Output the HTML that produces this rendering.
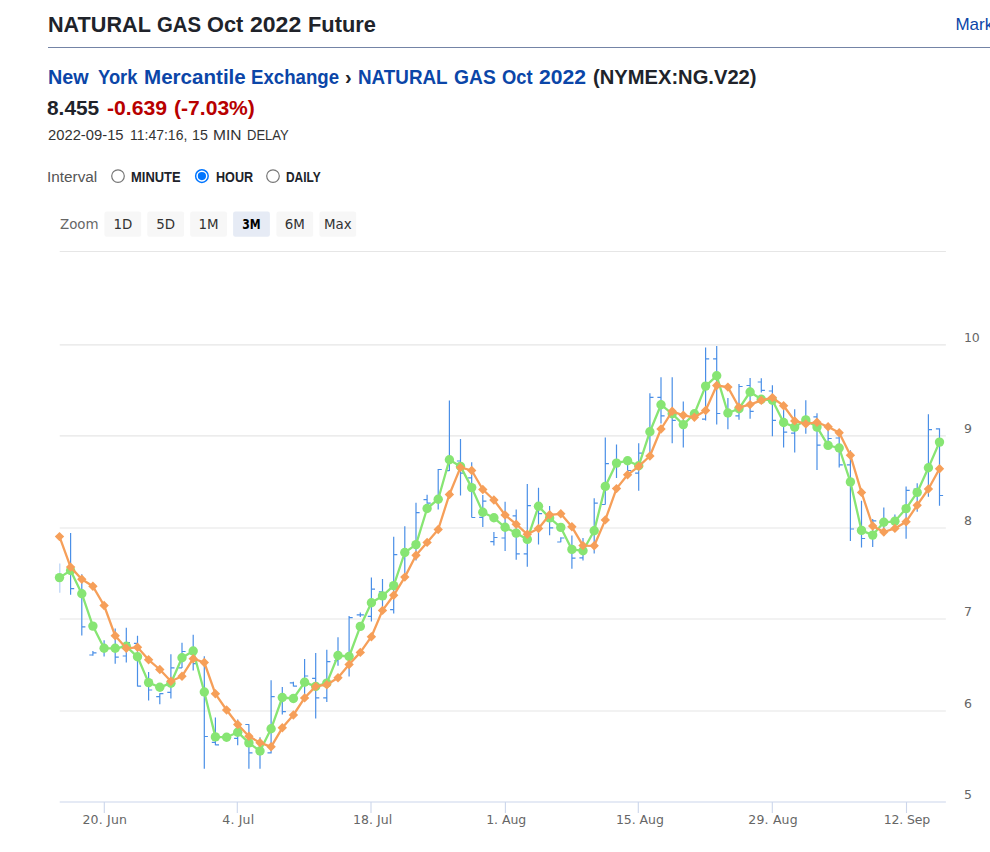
<!DOCTYPE html>
<html lang="en"><head><meta charset="utf-8"><title>NATURAL GAS Oct 2022 Future</title>
<style>
html,body{margin:0;padding:0;background:#fff}
body{width:990px;height:852px;position:relative;overflow:hidden;font-family:'Liberation Sans',sans-serif}
.t{position:absolute;white-space:pre;margin:0}
.hr{position:absolute;left:48px;top:46.8px;width:942px;height:1.2px;background:#7484a6}
.chart{position:absolute;left:0;top:0}
</style></head><body>
<div class="hr"></div>
<div id="ti0" class="t" style="left:47.50px;top:13.59px;height:22.1px;line-height:22.1px;font-size:22.1px;font-weight:700;color:#20232a;font-family:'Liberation Sans',sans-serif;transform:scaleX(0.9786);transform-origin:0 0;">NATURAL</div> <div id="ti1" class="t" style="left:157.25px;top:13.59px;height:22.1px;line-height:22.1px;font-size:22.1px;font-weight:700;color:#20232a;font-family:'Liberation Sans',sans-serif;transform:scaleX(0.9218);transform-origin:0 0;">GAS</div> <div id="ti2" class="t" style="left:206.75px;top:13.59px;height:22.1px;line-height:22.1px;font-size:22.1px;font-weight:700;color:#20232a;font-family:'Liberation Sans',sans-serif;transform:scaleX(0.9832);transform-origin:0 0;">Oct</div> <div id="ti3" class="t" style="left:250.00px;top:13.59px;height:22.1px;line-height:22.1px;font-size:22.1px;font-weight:700;color:#20232a;font-family:'Liberation Sans',sans-serif;transform:scaleX(1.0421);transform-origin:0 0;">2022</div> <div id="ti4" class="t" style="left:307.50px;top:13.59px;height:22.1px;line-height:22.1px;font-size:22.1px;font-weight:700;color:#20232a;font-family:'Liberation Sans',sans-serif;transform:scaleX(0.9872);transform-origin:0 0;">Future</div> <div id="mark" class="t" style="left:955.45px;top:15.61px;height:17px;line-height:17px;font-size:17px;font-weight:400;color:#0b46a8;font-family:'Liberation Sans',sans-serif;">Market</div> <div id="ba0" class="t" style="left:48.00px;top:67.65px;height:19.9px;line-height:19.9px;font-size:19.9px;font-weight:700;color:#0b46a8;font-family:'Liberation Sans',sans-serif;transform:scaleX(0.9937);transform-origin:0 0;">New</div> <div id="ba1" class="t" style="left:98.00px;top:67.65px;height:19.9px;line-height:19.9px;font-size:19.9px;font-weight:700;color:#0b46a8;font-family:'Liberation Sans',sans-serif;transform:scaleX(0.9224);transform-origin:0 0;">York</div> <div id="ba2" class="t" style="left:144.00px;top:67.65px;height:19.9px;line-height:19.9px;font-size:19.9px;font-weight:700;color:#0b46a8;font-family:'Liberation Sans',sans-serif;transform:scaleX(1.0342);transform-origin:0 0;">Mercantile</div> <div id="ba3" class="t" style="left:251.25px;top:67.65px;height:19.9px;line-height:19.9px;font-size:19.9px;font-weight:700;color:#0b46a8;font-family:'Liberation Sans',sans-serif;transform:scaleX(0.9369);transform-origin:0 0;">Exchange</div> <div id="bb0" class="t" style="left:345.00px;top:67.65px;height:19.9px;line-height:19.9px;font-size:19.9px;font-weight:700;color:#20232a;font-family:'Liberation Sans',sans-serif;">›</div> <div id="bc0" class="t" style="left:358.25px;top:67.65px;height:19.9px;line-height:19.9px;font-size:19.9px;font-weight:700;color:#0b46a8;font-family:'Liberation Sans',sans-serif;transform:scaleX(0.9466);transform-origin:0 0;">NATURAL</div> <div id="bc1" class="t" style="left:453.75px;top:67.65px;height:19.9px;line-height:19.9px;font-size:19.9px;font-weight:700;color:#0b46a8;font-family:'Liberation Sans',sans-serif;transform:scaleX(0.9687);transform-origin:0 0;">GAS</div> <div id="bc2" class="t" style="left:502.25px;top:67.65px;height:19.9px;line-height:19.9px;font-size:19.9px;font-weight:700;color:#0b46a8;font-family:'Liberation Sans',sans-serif;transform:scaleX(0.9226);transform-origin:0 0;">Oct</div> <div id="bc3" class="t" style="left:539.00px;top:67.65px;height:19.9px;line-height:19.9px;font-size:19.9px;font-weight:700;color:#0b46a8;font-family:'Liberation Sans',sans-serif;transform:scaleX(1.0643);transform-origin:0 0;">2022</div> <div id="bd0" class="t" style="left:593.00px;top:67.65px;height:19.9px;line-height:19.9px;font-size:19.9px;font-weight:700;color:#20232a;font-family:'Liberation Sans',sans-serif;transform:scaleX(1.0135);transform-origin:0 0;">(NYMEX:NG.V22)</div> <div id="pa0" class="t" style="left:47.25px;top:98.55px;height:19.9px;line-height:19.9px;font-size:19.9px;font-weight:700;color:#20232a;font-family:'Liberation Sans',sans-serif;transform:scaleX(1.0485);transform-origin:0 0;">8.455</div> <div id="pb0" class="t" style="left:106.75px;top:98.55px;height:19.9px;line-height:19.9px;font-size:19.9px;font-weight:700;color:#b80000;font-family:'Liberation Sans',sans-serif;transform:scaleX(1.0667);transform-origin:0 0;">-0.639</div> <div id="pb1" class="t" style="left:174.00px;top:98.55px;height:19.9px;line-height:19.9px;font-size:19.9px;font-weight:700;color:#b80000;font-family:'Liberation Sans',sans-serif;transform:scaleX(1.0606);transform-origin:0 0;">(-7.03%)</div> <div id="da0" class="t" style="left:48.00px;top:128.36px;height:14.7px;line-height:14.7px;font-size:14.7px;font-weight:400;color:#333;font-family:'Liberation Sans',sans-serif;transform:scaleX(1.0061);transform-origin:0 0;">2022-09-15</div> <div id="da1" class="t" style="left:129.50px;top:128.36px;height:14.7px;line-height:14.7px;font-size:14.7px;font-weight:400;color:#333;font-family:'Liberation Sans',sans-serif;transform:scaleX(0.9524);transform-origin:0 0;">11:47:16,</div> <div id="da2" class="t" style="left:192.00px;top:128.36px;height:14.7px;line-height:14.7px;font-size:14.7px;font-weight:400;color:#333;font-family:'Liberation Sans',sans-serif;transform:scaleX(0.9696);transform-origin:0 0;">15</div> <div id="da3" class="t" style="left:213.25px;top:128.36px;height:14.7px;line-height:14.7px;font-size:14.7px;font-weight:400;color:#333;font-family:'Liberation Sans',sans-serif;transform:scaleX(1.0572);transform-origin:0 0;">MIN</div> <div id="da4" class="t" style="left:246.50px;top:128.36px;height:14.7px;line-height:14.7px;font-size:14.7px;font-weight:400;color:#333;font-family:'Liberation Sans',sans-serif;transform:scaleX(0.8862);transform-origin:0 0;">DELAY</div> <div id="in0" class="t" style="left:46.75px;top:168.93px;height:15.2px;line-height:15.2px;font-size:15.2px;font-weight:400;color:#555;font-family:'Liberation Sans',sans-serif;transform:scaleX(1.0095);transform-origin:0 0;">Interval</div> <div id="r0" class="t" style="left:131.25px;top:169.86px;height:14.1px;line-height:14.1px;font-size:14.1px;font-weight:700;color:#20232a;font-family:'Liberation Sans',sans-serif;transform:scaleX(0.9191);transform-origin:0 0;">MINUTE</div> <div id="r1" class="t" style="left:215.50px;top:169.86px;height:14.1px;line-height:14.1px;font-size:14.1px;font-weight:700;color:#20232a;font-family:'Liberation Sans',sans-serif;transform:scaleX(0.8944);transform-origin:0 0;">HOUR</div> <div id="r2" class="t" style="left:285.75px;top:169.86px;height:14.1px;line-height:14.1px;font-size:14.1px;font-weight:700;color:#20232a;font-family:'Liberation Sans',sans-serif;transform:scaleX(0.8466);transform-origin:0 0;">DAILY</div>

<svg class="chart" width="990" height="852" viewBox="0 0 990 852"><circle cx="118" cy="176.1" r="6.3" fill="#fff" stroke="#767676" stroke-width="1.2"/><circle cx="201.9" cy="176.1" r="6.3" fill="#fff" stroke="#0075ff" stroke-width="1.5"/><circle cx="201.9" cy="176.1" r="4.1" fill="#0075ff"/><circle cx="273" cy="176.1" r="6.3" fill="#fff" stroke="#767676" stroke-width="1.2"/><path d="M59.7 251.5H945.9" stroke="#e6e6e6" stroke-width="1.1" fill="none"/><path d="M59.7 344.8H945.9" stroke="#e6e6e6" stroke-width="1.2" fill="none"/><path d="M59.7 435.8H945.9" stroke="#e6e6e6" stroke-width="1.2" fill="none"/><path d="M59.7 528.0H945.9" stroke="#e6e6e6" stroke-width="1.2" fill="none"/><path d="M59.7 619.0H945.9" stroke="#e6e6e6" stroke-width="1.2" fill="none"/><path d="M59.7 711.0H945.9" stroke="#e6e6e6" stroke-width="1.2" fill="none"/><path d="M59.7 802.0H945.9" stroke="#ccd6eb" stroke-width="1.2" fill="none"/><path d="M104.3 802.0v11" stroke="#ccd6eb" stroke-width="1.1" fill="none"/><path d="M237.3 802.0v11" stroke="#ccd6eb" stroke-width="1.1" fill="none"/><path d="M371.0 802.0v11" stroke="#ccd6eb" stroke-width="1.1" fill="none"/><path d="M505.4 802.0v11" stroke="#ccd6eb" stroke-width="1.1" fill="none"/><path d="M638.3 802.0v11" stroke="#ccd6eb" stroke-width="1.1" fill="none"/><path d="M772.3 802.0v11" stroke="#ccd6eb" stroke-width="1.1" fill="none"/><path d="M906.5 802.0v11" stroke="#ccd6eb" stroke-width="1.1" fill="none"/><path d="M70.6 532.9V594.7M70.6 588.7h3.6M81.8 574.2V635.5M81.8 626.8h3.6M92.9 651.1V655.8M92.9 655.0h-3.6M92.9 652.8h3.6M104.1 640.2V656.5M115.2 628.6V663.7M115.2 657.2h3.6M126.3 627.7V662.4M126.3 656.0h-3.6M126.3 642.5h3.6M137.5 635.8V686.4M137.5 643.4h-3.6M137.5 686.1h3.6M148.6 672.1V700.6M148.6 690.0h3.6M159.8 693.2V704.2M159.8 696.6h-3.6M159.8 693.7h3.6M170.9 654.3V698.5M170.9 692.4h-3.6M170.9 667.8h3.6M182.0 642.7V668.1M182.0 667.8h-3.6M182.0 651.5h3.6M193.2 634.8V670.5M193.2 663.7h3.6M204.3 656.3V768.7M204.3 736.5h3.6M215.4 717.4V745.3M215.4 742.3h-3.6M215.4 744.9h3.6M237.7 719.4V745.3M237.7 738.3h-3.6M248.9 724.2V768.7M248.9 724.5h-3.6M248.9 752.9h3.6M260.0 737.2V768.7M271.1 680.2V753.4M271.1 752.9h-3.6M271.1 696.7h3.6M282.3 687.0V714.5M282.3 711.7h3.6M293.4 681.8V686.6M293.4 682.9h-3.6M293.4 686.2h3.6M304.6 659.1V695.0M304.6 676.0h3.6M315.7 653.0V718.5M315.7 678.4h-3.6M315.7 697.8h3.6M326.8 649.7V702.0M326.8 697.8h-3.6M326.8 661.6h3.6M338.0 637.2V665.7M338.0 660.6h-3.6M349.1 616.1V676.6M349.1 617.7h3.6M360.3 612.4V616.9M360.3 614.8h-3.6M360.3 614.8h3.6M371.4 577.6V621.5M371.4 616.4h-3.6M371.4 589.1h3.6M382.5 578.9V611.3M382.5 591.8h-3.6M393.7 536.8V613.6M393.7 609.6h-3.6M393.7 554.6h3.6M404.8 526.3V576.0M416.0 502.8V560.4M416.0 512.6h3.6M427.1 494.7V503.8M427.1 499.6h-3.6M427.1 503.2h3.6M438.2 469.1V509.6M438.2 469.5h3.6M449.4 400.4V470.9M449.4 470.6h-3.6M460.5 438.9V495.5M460.5 461.0h-3.6M460.5 473.2h3.6M471.7 462.2V517.5M471.7 477.8h-3.6M471.7 517.5h3.6M482.8 495.0V527.0M482.8 517.4h-3.6M482.8 501.2h3.6M493.9 532.0V545.6M493.9 541.7h-3.6M493.9 537.5h3.6M505.1 501.7V550.9M505.1 538.0h-3.6M516.2 509.6V559.8M516.2 515.8h-3.6M516.2 553.8h3.6M527.3 484.0V566.8M527.3 553.8h-3.6M527.3 505.6h3.6M538.5 487.8V544.5M538.5 513.7h3.6M549.6 506.1V535.2M549.6 527.9h3.6M560.8 537.2V542.3M560.8 542.0h-3.6M560.8 538.0h3.6M571.9 535.5V568.7M571.9 558.2h3.6M583.0 538.0V560.6M583.0 557.9h-3.6M594.2 498.3V553.4M594.2 503.2h3.6M605.3 437.4V504.5M605.3 504.5h-3.6M605.3 463.6h3.6M616.5 444.4V478.0M627.6 463.0V470.8M627.6 470.5h3.6M638.7 443.3V490.7M638.7 473.1h-3.6M638.7 453.1h3.6M649.9 393.2V453.6M649.9 397.3h3.6M661.0 377.2V423.5M661.0 397.3h-3.6M661.0 415.8h3.6M672.2 377.2V443.3M672.2 420.4h3.6M683.3 401.4V447.6M705.6 347.5V420.5M705.6 419.2h-3.6M705.6 358.8h3.6M716.7 346.1V424.5M716.7 358.8h-3.6M716.7 413.5h3.6M727.9 398.0V429.3M739.0 384.0V419.7M739.0 415.8h-3.6M739.0 386.5h3.6M750.1 378.1V418.8M750.1 385.5h-3.6M750.1 411.3h3.6M761.3 378.2V392.6M761.3 382.0h-3.6M761.3 390.4h3.6M772.4 385.2V436.2M772.4 391.0h-3.6M772.4 420.3h3.6M783.6 403.0V447.6M783.6 432.2h3.6M794.7 409.3V452.6M794.7 433.2h-3.6M805.8 400.2V433.8M817.0 413.2V469.9M817.0 416.8h-3.6M817.0 445.2h3.6M828.1 430.0V441.0M828.1 438.5h3.6M839.2 436.5V467.4M839.2 438.0h-3.6M839.2 464.9h3.6M850.4 450.3V540.9M850.4 464.8h-3.6M850.4 529.0h3.6M861.5 500.8V547.6M861.5 538.5h3.6M872.7 519.0V547.0M872.7 520.8h3.6M883.8 507.6V536.0M894.9 514.6V526.0M906.1 486.5V538.7M906.1 490.3h3.6M917.2 483.2V511.8M917.2 489.2h-3.6M928.4 414.3V496.7M928.4 429.6h3.6M939.5 428.3V505.8M939.5 428.8h-3.6M939.5 495.5h3.6" stroke="#4a8fe7" stroke-width="1.2" fill="none"/><path d="M59.8 563.6V592.8" stroke="#4a8fe7" stroke-opacity="0.4" stroke-width="1.2" fill="none"/><polyline points="59.5,577.6 70.6,570.5 81.8,593.7 92.9,626.1 104.1,648.3 115.2,648.3 126.3,646.3 137.5,656.8 148.6,682.6 159.8,687.3 170.9,683.2 182.0,657.8 193.2,651.0 204.3,692.0 215.4,736.9 226.6,737.3 237.7,732.2 248.9,742.9 260.0,751.0 271.1,728.8 282.3,697.5 293.4,698.5 304.6,682.3 315.7,686.4 326.8,683.1 338.0,655.5 349.1,656.5 360.3,626.4 371.4,602.7 382.5,595.9 393.7,585.6 404.8,552.5 416.0,544.6 427.1,508.5 438.2,499.2 449.4,459.7 460.5,466.4 471.7,487.6 482.8,512.3 493.9,517.8 505.1,527.3 516.2,533.1 527.3,539.4 538.5,506.3 549.6,517.9 560.8,527.4 571.9,549.4 583.0,550.8 594.2,530.8 605.3,486.4 616.5,463.1 627.6,460.7 638.7,465.8 649.9,431.7 661.0,404.7 672.2,413.8 683.3,424.6 694.4,413.8 705.6,386.1 716.7,375.8 727.9,413.0 739.0,408.7 750.1,392.0 761.3,399.2 772.4,400.3 783.6,422.5 794.7,427.1 805.8,419.9 817.0,427.1 828.1,445.4 839.2,448.0 850.4,481.9 861.5,530.4 872.7,535.1 883.8,522.3 894.9,521.3 906.1,508.6 917.2,492.4 928.4,467.8 939.5,442.1" fill="none" stroke="#87e573" stroke-width="2.3" stroke-linejoin="round" stroke-linecap="round"/><g fill="#87e573"><circle cx="59.5" cy="577.6" r="4.7"/><circle cx="70.6" cy="570.5" r="4.7"/><circle cx="81.8" cy="593.7" r="4.7"/><circle cx="92.9" cy="626.1" r="4.7"/><circle cx="104.1" cy="648.3" r="4.7"/><circle cx="115.2" cy="648.3" r="4.7"/><circle cx="126.3" cy="646.3" r="4.7"/><circle cx="137.5" cy="656.8" r="4.7"/><circle cx="148.6" cy="682.6" r="4.7"/><circle cx="159.8" cy="687.3" r="4.7"/><circle cx="170.9" cy="683.2" r="4.7"/><circle cx="182.0" cy="657.8" r="4.7"/><circle cx="193.2" cy="651.0" r="4.7"/><circle cx="204.3" cy="692.0" r="4.7"/><circle cx="215.4" cy="736.9" r="4.7"/><circle cx="226.6" cy="737.3" r="4.7"/><circle cx="237.7" cy="732.2" r="4.7"/><circle cx="248.9" cy="742.9" r="4.7"/><circle cx="260.0" cy="751.0" r="4.7"/><circle cx="271.1" cy="728.8" r="4.7"/><circle cx="282.3" cy="697.5" r="4.7"/><circle cx="293.4" cy="698.5" r="4.7"/><circle cx="304.6" cy="682.3" r="4.7"/><circle cx="315.7" cy="686.4" r="4.7"/><circle cx="326.8" cy="683.1" r="4.7"/><circle cx="338.0" cy="655.5" r="4.7"/><circle cx="349.1" cy="656.5" r="4.7"/><circle cx="360.3" cy="626.4" r="4.7"/><circle cx="371.4" cy="602.7" r="4.7"/><circle cx="382.5" cy="595.9" r="4.7"/><circle cx="393.7" cy="585.6" r="4.7"/><circle cx="404.8" cy="552.5" r="4.7"/><circle cx="416.0" cy="544.6" r="4.7"/><circle cx="427.1" cy="508.5" r="4.7"/><circle cx="438.2" cy="499.2" r="4.7"/><circle cx="449.4" cy="459.7" r="4.7"/><circle cx="460.5" cy="466.4" r="4.7"/><circle cx="471.7" cy="487.6" r="4.7"/><circle cx="482.8" cy="512.3" r="4.7"/><circle cx="493.9" cy="517.8" r="4.7"/><circle cx="505.1" cy="527.3" r="4.7"/><circle cx="516.2" cy="533.1" r="4.7"/><circle cx="527.3" cy="539.4" r="4.7"/><circle cx="538.5" cy="506.3" r="4.7"/><circle cx="549.6" cy="517.9" r="4.7"/><circle cx="560.8" cy="527.4" r="4.7"/><circle cx="571.9" cy="549.4" r="4.7"/><circle cx="583.0" cy="550.8" r="4.7"/><circle cx="594.2" cy="530.8" r="4.7"/><circle cx="605.3" cy="486.4" r="4.7"/><circle cx="616.5" cy="463.1" r="4.7"/><circle cx="627.6" cy="460.7" r="4.7"/><circle cx="638.7" cy="465.8" r="4.7"/><circle cx="649.9" cy="431.7" r="4.7"/><circle cx="661.0" cy="404.7" r="4.7"/><circle cx="672.2" cy="413.8" r="4.7"/><circle cx="683.3" cy="424.6" r="4.7"/><circle cx="694.4" cy="413.8" r="4.7"/><circle cx="705.6" cy="386.1" r="4.7"/><circle cx="716.7" cy="375.8" r="4.7"/><circle cx="727.9" cy="413.0" r="4.7"/><circle cx="739.0" cy="408.7" r="4.7"/><circle cx="750.1" cy="392.0" r="4.7"/><circle cx="761.3" cy="399.2" r="4.7"/><circle cx="772.4" cy="400.3" r="4.7"/><circle cx="783.6" cy="422.5" r="4.7"/><circle cx="794.7" cy="427.1" r="4.7"/><circle cx="805.8" cy="419.9" r="4.7"/><circle cx="817.0" cy="427.1" r="4.7"/><circle cx="828.1" cy="445.4" r="4.7"/><circle cx="839.2" cy="448.0" r="4.7"/><circle cx="850.4" cy="481.9" r="4.7"/><circle cx="861.5" cy="530.4" r="4.7"/><circle cx="872.7" cy="535.1" r="4.7"/><circle cx="883.8" cy="522.3" r="4.7"/><circle cx="894.9" cy="521.3" r="4.7"/><circle cx="906.1" cy="508.6" r="4.7"/><circle cx="917.2" cy="492.4" r="4.7"/><circle cx="928.4" cy="467.8" r="4.7"/><circle cx="939.5" cy="442.1" r="4.7"/></g><polyline points="59.5,536.6 70.6,567.1 81.8,579.2 92.9,586.3 104.1,605.5 115.2,635.8 126.3,648.3 137.5,647.3 148.6,659.8 159.8,669.5 170.9,681.2 182.0,676.2 193.2,658.7 204.3,662.5 215.4,693.8 226.6,710.0 237.7,724.5 248.9,736.3 260.0,742.7 271.1,746.8 282.3,727.8 293.4,715.0 304.6,697.9 315.7,686.4 326.8,684.7 338.0,677.7 349.1,664.5 360.3,652.4 371.4,636.7 382.5,610.4 393.7,595.3 404.8,577.1 416.0,555.3 427.1,542.4 438.2,529.5 449.4,494.5 460.5,467.4 471.7,470.5 482.8,489.5 493.9,500.0 505.1,515.0 516.2,524.2 527.3,534.3 538.5,528.5 549.6,514.8 560.8,513.8 571.9,526.8 583.0,545.6 594.2,545.8 605.3,519.9 616.5,488.6 627.6,474.8 638.7,466.4 649.9,456.0 661.0,429.0 672.2,411.3 683.3,415.3 694.4,417.3 705.6,410.5 716.7,385.5 727.9,387.1 739.0,407.3 750.1,404.6 761.3,400.4 772.4,397.6 783.6,405.7 794.7,420.9 805.8,423.9 817.0,422.3 828.1,426.8 839.2,432.7 850.4,455.3 861.5,492.4 872.7,526.0 883.8,532.0 894.9,528.4 906.1,521.7 917.2,505.2 928.4,489.0 939.5,468.8" fill="none" stroke="#f69f59" stroke-width="2.3" stroke-linejoin="round" stroke-linecap="round"/><g fill="#f69f59"><path d="M59.5 531.9l4.7 4.7l-4.7 4.7l-4.7 -4.7z"/><path d="M70.6 562.4l4.7 4.7l-4.7 4.7l-4.7 -4.7z"/><path d="M81.8 574.5l4.7 4.7l-4.7 4.7l-4.7 -4.7z"/><path d="M92.9 581.6l4.7 4.7l-4.7 4.7l-4.7 -4.7z"/><path d="M104.1 600.8l4.7 4.7l-4.7 4.7l-4.7 -4.7z"/><path d="M115.2 631.1l4.7 4.7l-4.7 4.7l-4.7 -4.7z"/><path d="M126.3 643.6l4.7 4.7l-4.7 4.7l-4.7 -4.7z"/><path d="M137.5 642.6l4.7 4.7l-4.7 4.7l-4.7 -4.7z"/><path d="M148.6 655.1l4.7 4.7l-4.7 4.7l-4.7 -4.7z"/><path d="M159.8 664.8l4.7 4.7l-4.7 4.7l-4.7 -4.7z"/><path d="M170.9 676.5l4.7 4.7l-4.7 4.7l-4.7 -4.7z"/><path d="M182.0 671.5l4.7 4.7l-4.7 4.7l-4.7 -4.7z"/><path d="M193.2 654.0l4.7 4.7l-4.7 4.7l-4.7 -4.7z"/><path d="M204.3 657.8l4.7 4.7l-4.7 4.7l-4.7 -4.7z"/><path d="M215.4 689.1l4.7 4.7l-4.7 4.7l-4.7 -4.7z"/><path d="M226.6 705.3l4.7 4.7l-4.7 4.7l-4.7 -4.7z"/><path d="M237.7 719.8l4.7 4.7l-4.7 4.7l-4.7 -4.7z"/><path d="M248.9 731.6l4.7 4.7l-4.7 4.7l-4.7 -4.7z"/><path d="M260.0 738.0l4.7 4.7l-4.7 4.7l-4.7 -4.7z"/><path d="M271.1 742.1l4.7 4.7l-4.7 4.7l-4.7 -4.7z"/><path d="M282.3 723.1l4.7 4.7l-4.7 4.7l-4.7 -4.7z"/><path d="M293.4 710.3l4.7 4.7l-4.7 4.7l-4.7 -4.7z"/><path d="M304.6 693.2l4.7 4.7l-4.7 4.7l-4.7 -4.7z"/><path d="M315.7 681.7l4.7 4.7l-4.7 4.7l-4.7 -4.7z"/><path d="M326.8 680.0l4.7 4.7l-4.7 4.7l-4.7 -4.7z"/><path d="M338.0 673.0l4.7 4.7l-4.7 4.7l-4.7 -4.7z"/><path d="M349.1 659.8l4.7 4.7l-4.7 4.7l-4.7 -4.7z"/><path d="M360.3 647.7l4.7 4.7l-4.7 4.7l-4.7 -4.7z"/><path d="M371.4 632.0l4.7 4.7l-4.7 4.7l-4.7 -4.7z"/><path d="M382.5 605.7l4.7 4.7l-4.7 4.7l-4.7 -4.7z"/><path d="M393.7 590.6l4.7 4.7l-4.7 4.7l-4.7 -4.7z"/><path d="M404.8 572.4l4.7 4.7l-4.7 4.7l-4.7 -4.7z"/><path d="M416.0 550.6l4.7 4.7l-4.7 4.7l-4.7 -4.7z"/><path d="M427.1 537.7l4.7 4.7l-4.7 4.7l-4.7 -4.7z"/><path d="M438.2 524.8l4.7 4.7l-4.7 4.7l-4.7 -4.7z"/><path d="M449.4 489.8l4.7 4.7l-4.7 4.7l-4.7 -4.7z"/><path d="M460.5 462.7l4.7 4.7l-4.7 4.7l-4.7 -4.7z"/><path d="M471.7 465.8l4.7 4.7l-4.7 4.7l-4.7 -4.7z"/><path d="M482.8 484.8l4.7 4.7l-4.7 4.7l-4.7 -4.7z"/><path d="M493.9 495.3l4.7 4.7l-4.7 4.7l-4.7 -4.7z"/><path d="M505.1 510.3l4.7 4.7l-4.7 4.7l-4.7 -4.7z"/><path d="M516.2 519.5l4.7 4.7l-4.7 4.7l-4.7 -4.7z"/><path d="M527.3 529.6l4.7 4.7l-4.7 4.7l-4.7 -4.7z"/><path d="M538.5 523.8l4.7 4.7l-4.7 4.7l-4.7 -4.7z"/><path d="M549.6 510.1l4.7 4.7l-4.7 4.7l-4.7 -4.7z"/><path d="M560.8 509.1l4.7 4.7l-4.7 4.7l-4.7 -4.7z"/><path d="M571.9 522.1l4.7 4.7l-4.7 4.7l-4.7 -4.7z"/><path d="M583.0 540.9l4.7 4.7l-4.7 4.7l-4.7 -4.7z"/><path d="M594.2 541.1l4.7 4.7l-4.7 4.7l-4.7 -4.7z"/><path d="M605.3 515.2l4.7 4.7l-4.7 4.7l-4.7 -4.7z"/><path d="M616.5 483.9l4.7 4.7l-4.7 4.7l-4.7 -4.7z"/><path d="M627.6 470.1l4.7 4.7l-4.7 4.7l-4.7 -4.7z"/><path d="M638.7 461.7l4.7 4.7l-4.7 4.7l-4.7 -4.7z"/><path d="M649.9 451.3l4.7 4.7l-4.7 4.7l-4.7 -4.7z"/><path d="M661.0 424.3l4.7 4.7l-4.7 4.7l-4.7 -4.7z"/><path d="M672.2 406.6l4.7 4.7l-4.7 4.7l-4.7 -4.7z"/><path d="M683.3 410.6l4.7 4.7l-4.7 4.7l-4.7 -4.7z"/><path d="M694.4 412.6l4.7 4.7l-4.7 4.7l-4.7 -4.7z"/><path d="M705.6 405.8l4.7 4.7l-4.7 4.7l-4.7 -4.7z"/><path d="M716.7 380.8l4.7 4.7l-4.7 4.7l-4.7 -4.7z"/><path d="M727.9 382.4l4.7 4.7l-4.7 4.7l-4.7 -4.7z"/><path d="M739.0 402.6l4.7 4.7l-4.7 4.7l-4.7 -4.7z"/><path d="M750.1 399.9l4.7 4.7l-4.7 4.7l-4.7 -4.7z"/><path d="M761.3 395.7l4.7 4.7l-4.7 4.7l-4.7 -4.7z"/><path d="M772.4 392.9l4.7 4.7l-4.7 4.7l-4.7 -4.7z"/><path d="M783.6 401.0l4.7 4.7l-4.7 4.7l-4.7 -4.7z"/><path d="M794.7 416.2l4.7 4.7l-4.7 4.7l-4.7 -4.7z"/><path d="M805.8 419.2l4.7 4.7l-4.7 4.7l-4.7 -4.7z"/><path d="M817.0 417.6l4.7 4.7l-4.7 4.7l-4.7 -4.7z"/><path d="M828.1 422.1l4.7 4.7l-4.7 4.7l-4.7 -4.7z"/><path d="M839.2 428.0l4.7 4.7l-4.7 4.7l-4.7 -4.7z"/><path d="M850.4 450.6l4.7 4.7l-4.7 4.7l-4.7 -4.7z"/><path d="M861.5 487.7l4.7 4.7l-4.7 4.7l-4.7 -4.7z"/><path d="M872.7 521.3l4.7 4.7l-4.7 4.7l-4.7 -4.7z"/><path d="M883.8 527.3l4.7 4.7l-4.7 4.7l-4.7 -4.7z"/><path d="M894.9 523.7l4.7 4.7l-4.7 4.7l-4.7 -4.7z"/><path d="M906.1 517.0l4.7 4.7l-4.7 4.7l-4.7 -4.7z"/><path d="M917.2 500.5l4.7 4.7l-4.7 4.7l-4.7 -4.7z"/><path d="M928.4 484.3l4.7 4.7l-4.7 4.7l-4.7 -4.7z"/><path d="M939.5 464.1l4.7 4.7l-4.7 4.7l-4.7 -4.7z"/></g><g fill="#666" font-size="12.5" style="font-family:'DejaVu Sans',sans-serif"><text x="963.9" y="341.9">10</text><text x="963.9" y="432.9">9</text><text x="963.9" y="525.1">8</text><text x="963.9" y="616.1">7</text><text x="963.9" y="708.1">6</text><text x="963.9" y="799.1">5</text><text x="104.7" y="824.2" text-anchor="middle" textLength="44.5">20. Jun</text><text x="238.2" y="824.2" text-anchor="middle" textLength="31.9">4. Jul</text><text x="372.6" y="824.2" text-anchor="middle" textLength="39.2">18. Jul</text><text x="506.2" y="824.2" text-anchor="middle" textLength="40.0">1. Aug</text><text x="639.9" y="824.2" text-anchor="middle" textLength="48.0">15. Aug</text><text x="773.0" y="824.2" text-anchor="middle" textLength="49.3">29. Aug</text><text x="907.0" y="824.2" text-anchor="middle" textLength="46.5">12. Sep</text></g><rect x="104.4" y="211.4" width="36.8" height="25.4" rx="2.3" fill="#f7f7f7"/><text x="122.8" y="228.8" text-anchor="middle" font-size="13.4" fill="#333" style="font-family:'DejaVu Sans',sans-serif">1D</text><rect x="147.3" y="211.4" width="36.8" height="25.4" rx="2.3" fill="#f7f7f7"/><text x="165.7" y="228.8" text-anchor="middle" font-size="13.4" fill="#333" style="font-family:'DejaVu Sans',sans-serif">5D</text><rect x="190.2" y="211.4" width="36.8" height="25.4" rx="2.3" fill="#f7f7f7"/><text x="208.6" y="228.8" text-anchor="middle" font-size="13.4" fill="#333" style="font-family:'DejaVu Sans',sans-serif">1M</text><rect x="233.1" y="211.4" width="36.8" height="25.4" rx="2.3" fill="#e6ebf5"/><text x="251.5" y="228.8" text-anchor="middle" font-size="13.4" fill="#000" style="font-family:'DejaVu Sans',sans-serif;font-weight:bold" textLength="18.4" lengthAdjust="spacingAndGlyphs">3M</text><rect x="276.4" y="211.4" width="36.8" height="25.4" rx="2.3" fill="#f7f7f7"/><text x="294.8" y="228.8" text-anchor="middle" font-size="13.4" fill="#333" style="font-family:'DejaVu Sans',sans-serif">6M</text><rect x="319.4" y="211.4" width="36.8" height="25.4" rx="2.3" fill="#f7f7f7"/><text x="337.8" y="228.8" text-anchor="middle" font-size="13.4" fill="#333" style="font-family:'DejaVu Sans',sans-serif">Max</text><text x="60" y="228.8" font-size="13.4" fill="#666" style="font-family:'DejaVu Sans',sans-serif">Zoom</text></svg>
</body></html>
